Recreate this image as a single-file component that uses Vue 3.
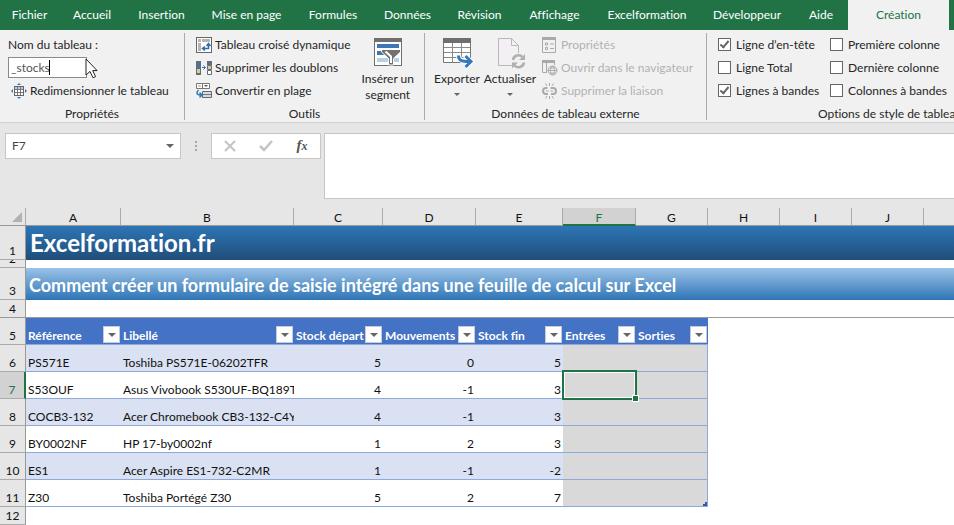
<script setup>
import { ref } from 'vue'

const tabs = ['Fichier', 'Accueil', 'Insertion', 'Mise en page', 'Formules', 'Données', 'Révision', 'Affichage', 'Excelformation', 'Développeur', 'Aide', 'Création']
const activeTab = ref('Création')
const tableName = ref('_stocks')
const cellRef = ref('F7')
const formula = ref('')

const options = ref([
  { id: 'header', label: 'Ligne d’en-tête', on: true },
  { id: 'first', label: 'Première colonne', on: false },
  { id: 'total', label: 'Ligne Total', on: false },
  { id: 'last', label: 'Dernière colonne', on: false },
  { id: 'rows', label: 'Lignes à bandes', on: true },
  { id: 'cols', label: 'Colonnes à bandes', on: false }
])

const letters = ['A', 'B', 'C', 'D', 'E', 'F', 'G', 'H', 'I', 'J', '']
const headers = ['Référence', 'Libellé', 'Stock départ', 'Mouvements', 'Stock fin', 'Entrées', 'Sorties']
const rows = [
  { n: 6, cells: ['PS571E', 'Toshiba PS571E-06202TFR', 5, 0, 5] },
  { n: 7, cells: ['S53OUF', 'Asus Vivobook S530UF-BQ189T', 4, -1, 3] },
  { n: 8, cells: ['COCB3-132', 'Acer Chromebook CB3-132-C4Y', 4, -1, 3] },
  { n: 9, cells: ['BY0002NF', 'HP 17-by0002nf', 1, 2, 3] },
  { n: 10, cells: ['ES1', 'Acer Aspire ES1-732-C2MR', 1, -1, -2] },
  { n: 11, cells: ['Z30', 'Toshiba Portégé Z30', 5, 2, 7] }
]
</script>

<template>
  <div class="app">
    <nav class="tabs">
      <button v-for="t in tabs" :key="t" class="tab" :class="{ active: t === activeTab }" @click="activeTab = t">{{ t }}</button>
    </nav>

    <section class="ribbon">
      <div class="group g-props">
        <div class="group-body stack">
          <label class="line" for="table-name">Nom du tableau :</label>
          <div class="line name-line">
            <input id="table-name" v-model="tableName" class="name-input" type="text">
            <span class="caret"></span>
            <svg class="pointer" width="14" height="21" viewBox="0 0 14 21"><path d="M1 1v16l4-3.600 3 6.400 2.600-1.200-2.900-6h4.400z" fill="#fff" stroke="#222" /></svg>
          </div>
          <button class="line cmd resize">
            <svg width="16" height="16" viewBox="0 0 16 16">
              <rect x="3.500" y="3.500" width="9" height="9" fill="#fff" stroke="#666" />
              <path d="M4 4h8v2H4z" fill="#b9cfe8" />
              <path d="M4 6.500h8M4 9.500h8M6.500 4v8M9.500 4v8" stroke="#777" />
              <path d="M8 0l2 2h-4zM8 16l2-2h-4zM0 8l2-2v4zM16 8l-2-2v4z" fill="#3b78b5" />
            </svg>
            Redimensionner le tableau
          </button>
        </div>
        <div class="group-title">Propriétés</div>
      </div>

      <div class="group g-tools">
        <div class="group-body">
          <div class="stack grow">
            <button class="line cmd">
              <svg width="16" height="16" viewBox="0 0 16 16">
                <rect x=".5" y=".5" width="15" height="15" fill="#fff" stroke="#666" />
                <path d="M2 2h3v3H2zM6 2h8v3H6zM2 6h3v8H2z" fill="#b5b5b5" />
                <path d="M7 11.500h5.500V7.500M10.500 9l2-2.500 2 2.500M9 9.500l-2.500 2L9 13.500" fill="none" stroke="#2f6fab" stroke-width="1.500" />
              </svg>
              Tableau croisé dynamique
            </button>
            <button class="line cmd">
              <svg width="16" height="16" viewBox="0 0 16 16">
                <path d="M0 1h5v14H0z" fill="#626c7b" /><path d="M1 5h3v3H1z" fill="#3f76b0" /><path d="M1 9h3v4H1z" fill="#e0c98f" />
                <path d="M11 1h5v4h-5z" fill="#626c7b" /><path d="M11.500 5.500h4v4h-4z" fill="#e0c98f" stroke="#626c7b" /><path d="M11.500 10.500h4v4h-4z" fill="#fff" stroke="#626c7b" />
                <path d="M6 7.500h3.500M7.500 5.500l2 2-2 2" fill="none" stroke="#3f76b0" />
              </svg>
              Supprimer les doublons
            </button>
            <button class="line cmd">
              <svg width="16" height="16" viewBox="0 0 16 16">
                <path d="M.5.500h13v5H.500zM6.500.500v5" fill="#fff" stroke="#777" /><path d="M2 3h3" stroke="#999" /><path d="M8 2h4l-2 2z" fill="#555" />
                <path d="M6.500 8.500h9v6h-9z" fill="#cfdcec" stroke="#666" /><path d="M7 11.500h8" stroke="#777" />
                <path d="M2.500 7C0 9.500.500 12 5 12M3.500 9.500L6 12l-2.500 2.500" fill="none" stroke="#3679b8" stroke-width="1.500" />
              </svg>
              Convertir en plage
            </button>
          </div>
          <button class="big slicer">
            <svg width="28" height="28" viewBox="0 0 28 28">
              <rect x=".5" y=".5" width="27" height="27" fill="#fff" stroke="#6f6f6f" />
              <path d="M0 0h28v4H0z" fill="#6f6f6f" />
              <path d="M3 6h22v4H3zM3 13h7v4H3z" fill="#3d78b4" /><path d="M3 20h22v4H3z" fill="#b9cfe8" />
              <path d="M7.500 11.500h19v2.500l-7 6.500V27h-5v-6.500L7.500 14z" fill="#737373" stroke="#fff" />
              <path d="M11.500 13.500l5.500 5V25" fill="none" stroke="#fff" stroke-width="2" />
            </svg>
            <span>Insérer un<br>segment</span>
          </button>
        </div>
        <div class="group-title">Outils</div>
      </div>

      <div class="group g-data">
        <div class="group-body">
          <button class="big export">
            <svg width="28" height="30" viewBox="0 0 28 30" overflow="visible">
              <path d="M.5.500h27v24H.500z" fill="#fff" stroke="#777" /><path d="M0 0h28v5H0z" fill="#6f6f6f" />
              <path d="M1 9.500h26M1 14.500h26M1 19.500h26M9.500 5v19M18.500 5v19" stroke="#8a8a8a" />
              <path d="M15.500 17c0 5 3 6.500 11 6.500M22 18l6 5.500-6 6" fill="none" stroke="#fff" stroke-width="5" />
              <path d="M15.500 17.500c0 5 3 6 11 6M22.500 18l5.500 5.500-5.500 5.500" fill="none" stroke="#3779ba" stroke-width="3" />
            </svg>
            <span>Exporter</span>
            <i class="arrow"></i>
          </button>
          <button class="big refresh">
            <svg width="26" height="30" viewBox="0 0 26 30" overflow="visible">
              <path d="M1.500.500h13l7 7v20h-20z" fill="#f4eff4" stroke="#b8b8b8" /><path d="M14.500.500v7h7" fill="none" stroke="#b8b8b8" />
              <circle cx="21.500" cy="23" r="8" fill="#f1f1f1" />
              <path d="M16 22a5.500 5.500 0 0 1 9.500-3M27 24.500a5.500 5.500 0 0 1-9.500 3" fill="none" stroke="#b0b0b0" stroke-width="2.500" />
              <path d="M28 16v6h-6zM15 30.500v-6h6z" fill="#b0b0b0" />
            </svg>
            <span>Actualiser</span>
            <i class="arrow"></i>
          </button>
          <div class="stack links">
            <button class="line cmd" disabled>
              <svg width="16" height="16" viewBox="0 0 16 16">
                <path d="M.500.500h13v15h-13z" fill="none" stroke="#aaa" /><path d="M0 0h14v3H0z" fill="#aaa" />
                <path d="M3.500 6h2v2h-2zM3.500 10.500h2v2h-2z" fill="none" stroke="#aaa" /><path d="M8 7h4M8 11.500h4" stroke="#aaa" />
              </svg>
              Propriétés
            </button>
            <button class="line cmd" disabled>
              <svg width="16" height="16" viewBox="0 0 16 16">
                <path d="M5 12.500H.500V.500h12V5M4.500 3v9" fill="none" stroke="#aaa" /><path d="M0 0h13v3H0z" fill="#aaa" />
                <circle cx="10.500" cy="10.500" r="4.500" fill="#f1f1f1" stroke="#aaa" /><path d="M6 10.500h9M10.500 6c-3 3-3 6 0 9M10.500 6c3 3 3 6 0 9M7.500 8h6M7.500 13h6" fill="none" stroke="#aaa" />
              </svg>
              Ouvrir dans le navigateur
            </button>
            <button class="line cmd" disabled>
              <svg width="16" height="16" viewBox="0 0 16 16">
                <path d="M5.500 5H4a3 3 0 0 0 0 6h2M8.500 5H11a3 3 0 0 1 0 6H9" fill="none" stroke="#aaa" stroke-width="2" />
                <path d="M7.500 0v3M3.500.500L5 3M11.500.500L10 3M7.500 13v3M3.500 15.500L5 13M11.500 15.500L10 13M4 8h2.500M8.500 8H11" stroke="#aaa" />
              </svg>
              Supprimer la liaison
            </button>
          </div>
        </div>
        <div class="group-title">Données de tableau externe</div>
      </div>

      <div class="group g-options">
        <div class="group-body checks">
          <label v-for="o in options" :key="o.id" class="line check" :for="'opt-' + o.id">
            <input :id="'opt-' + o.id" v-model="o.on" type="checkbox">{{ o.label }}
          </label>
        </div>
        <div class="group-title">Options de style de tableau</div>
      </div>
    </section>

    <section class="formula-bar">
      <div class="cell-ref">
        <input v-model="cellRef" type="text" aria-label="Zone Nom">
        <i class="arrow"></i>
      </div>
      <span class="dots"><i></i><i></i><i></i></span>
      <div class="fx-buttons">
        <button aria-label="Annuler"><svg width="12" height="12" viewBox="0 0 12 12"><path d="M1 1l10 10M11 1L1 11" stroke="#c4c4c4" stroke-width="2" /></svg></button>
        <button aria-label="Entrer"><svg width="14" height="12" viewBox="0 0 14 12"><path d="M1 6l4 4L13 1" fill="none" stroke="#c4c4c4" stroke-width="2.500" /></svg></button>
        <button class="fx" aria-label="Insérer une fonction">f<small>x</small></button>
      </div>
      <textarea v-model="formula" class="formula" aria-label="Barre de formule"></textarea>
    </section>

    <main class="sheet">
      <table>
        <colgroup>
          <col class="w-head"><col class="w-a"><col class="w-b"><col class="w-c"><col class="w-d"><col class="w-e"><col class="w-f">
          <col class="w-g"><col class="w-g"><col class="w-g"><col class="w-g"><col>
        </colgroup>
        <thead>
          <tr class="letters">
            <th class="corner"><svg width="10" height="10" viewBox="0 0 10 10"><path d="M10 0v10H0z" fill="#b2b2b2" /></svg></th>
            <th v-for="(l, i) in letters" :key="i" :class="{ current: l === 'F' }">{{ l }}</th>
          </tr>
        </thead>
        <tbody>
          <tr class="r-title"><th class="num">1</th><td colspan="11" class="title">Excelformation.fr</td></tr>
          <tr class="r-thin"><th class="num"><div>2</div></th><td colspan="11"></td></tr>
          <tr class="r-sub"><th class="num">3</th><td colspan="11" class="subtitle">Comment créer un formulaire de saisie intégré dans une feuille de calcul sur Excel</td></tr>
          <tr class="r-gap"><th class="num">4</th><td colspan="11"></td></tr>
          <tr class="r-head">
            <th class="num">5</th>
            <th v-for="h in headers" :key="h" class="field">
              <div><span>{{ h }}</span><button :aria-label="'Filtrer ' + h"><i class="arrow"></i></button></div>
            </th>
            <td colspan="4"></td>
          </tr>
          <tr v-for="r in rows" :key="r.n" class="r-data" :class="{ band: r.n % 2 === 0 }">
            <th class="num" :class="{ current: r.n === 7 }">{{ r.n }}</th>
            <td v-for="(c, i) in r.cells" :key="i" class="data" :class="{ right: i > 1 }">{{ c }}</td>
            <td class="data entry"><div v-if="r.n === 7" class="selection"></div></td>
            <td class="data entry last"><i v-if="r.n === 11" class="grip"></i></td>
            <td colspan="4"></td>
          </tr>
          <tr class="r-end"><th class="num">12</th><td colspan="11"></td></tr>
        </tbody>
      </table>
    </main>
  </div>
</template>

<style>
body { margin: 0; background: #fff; }
</style>

<style scoped>
.app { font: 12px/16px Lato, "Open Sans", sans-serif; font-variant-ligatures: none; color: #262626; overflow: hidden; background: #fff; }
button, input, textarea { font: inherit; font-variant-ligatures: none; color: inherit; margin: 0; padding: 0; border: 0; background: none; border-radius: 0; box-sizing: border-box; }
svg { flex: none; display: block; }

.tabs { display: grid; grid-template-columns: 59px 66px 73px 97px 76px 73px 71px 79px 106px 94px 54px 101px; background: #217346; }
.tab { height: 30px; color: #fff; white-space: nowrap; }
.tab.active { background: #f1f1f1; color: #217346; }

.ribbon { display: flex; padding: 3px 0 2px; background: #f1f1f1; border-bottom: 1px solid #d0d0d0; overflow: hidden; }
.group { box-sizing: border-box; flex: none; border-right: 1px solid #ababab; white-space: nowrap; }
.g-props { width: 185px; }
.g-tools { width: 240px; }
.g-data { width: 282px; }
.g-options { width: 364px; }
.group-body { display: flex; height: 69px; }
.stack { display: flex; flex-direction: column; }
.g-props .stack { padding-left: 8px; }
.line { display: flex; align-items: center; height: 23px; }
.cmd { gap: 3px; text-align: left; }
.cmd:disabled { color: #b1b1b1; }
.resize { padding-left: 3px; }
.group-title { text-align: center; padding-top: 6px; line-height: 12px; }
.g-options .group-title { text-align: left; padding-left: 111px; }
.name-line { position: relative; }
.name-input { width: 79px; height: 21px; padding-left: 2px; border: 1px solid #8a8a8a; background: #fff; color: #555; }
.caret { position: absolute; left: 41px; top: 4px; width: 1px; height: 15px; background: #000; }
.pointer { position: absolute; left: 77px; top: 2px; }
.g-tools .stack { padding-left: 11px; }
.big { display: flex; flex-direction: column; align-items: center; }
.slicer { padding: 5px 10px 0 0; gap: 5px; }
.grow { flex: 1; }
.export { width: 52px; margin-left: 6px; padding-top: 5px; gap: 3px; }
.refresh { width: 54px; padding-top: 5px; gap: 3px; }
.links { padding-left: 5px; }
.arrow { width: 0; height: 0; border: 4px solid transparent; border-top-color: #666; border-bottom: 0; }
.big .arrow { margin-top: 3px; border-width: 3px; border-bottom: 0; }
.checks { display: grid; grid-template-columns: 112px 120px; padding-left: 11px; }
.check { gap: 5px; }
.check input { appearance: none; flex: none; display: grid; place-items: center; width: 13px; height: 13px; border: 1px solid #666; background: #fff; }
.check input:checked::after { content: ""; width: 3px; height: 7px; margin-bottom: 3px; border: solid #666; border-width: 0 2px 2px 0; transform: rotate(40deg); }

.formula-bar { display: flex; align-items: flex-start; padding: 10px 0 9px 5px; background: #e6e6e6; }
.cell-ref { display: flex; align-items: center; box-sizing: border-box; width: 176px; height: 26px; padding: 0 6px; background: #fff; border: 1px solid #c6c6c6; }
.cell-ref input { flex: 1; min-width: 0; color: #444; }
.dots { display: flex; flex-direction: column; align-items: center; gap: 2px; width: 30px; padding-top: 8px; }
.dots i { width: 2px; height: 2px; background: #a6a6a6; }
.fx-buttons { display: grid; grid-template-columns: 1fr 1fr 1fr; box-sizing: border-box; width: 110px; height: 26px; background: #fff; border: 1px solid #c6c6c6; }
.fx-buttons button { display: grid; place-items: center; }
.fx-buttons .fx { display: flex; align-items: baseline; justify-content: center; font: italic bold 15px/22px "Liberation Serif", serif; color: #555; }
.fx small { font-size: 12px; }
.formula { flex: 1; height: 66px; margin-left: 3px; background: #fff; border: 1px solid #c6c6c6; border-right: 0; resize: none; }

.sheet { overflow: hidden; color: #111; }
table { width: 100%; table-layout: fixed; border-collapse: separate; border-spacing: 0; }
.w-head { width: 26px; }
.w-a { width: 95px; }
.w-b { width: 173px; }
.w-c { width: 89px; }
.w-d { width: 93px; }
.w-e { width: 87px; }
.w-f { width: 73px; }
.w-g { width: 72px; }
th, td { box-sizing: border-box; padding: 0; overflow: hidden; white-space: nowrap; vertical-align: bottom; text-align: left; }
.letters th { height: 18px; background: #e6e6e6; border-right: 1px solid #ababab; border-bottom: 1px solid #999; text-align: center; font-weight: 400; line-height: 15px; }
.letters th:last-child { border-right: 0; }
.letters .current { background: #d2d2d2; border-bottom: 2px solid #217346; color: #217346; line-height: 13px; }
.corner svg { margin: 0 3px 3px auto; }
.num { background: #e6e6e6; border-right: 1px solid #999; border-bottom: 1px solid #ababab; text-align: center; font-weight: 400; }
.num.current { background: #d2d2d2; border-right: 2px solid #217346; color: #217346; }
.r-title > * { height: 34px; }
.r-thin > * { height: 8px; }
.r-thin div { display: flex; align-items: flex-end; justify-content: center; height: 7px; overflow: hidden; }
.r-sub > * { height: 32px; }
.r-gap > * { height: 18px; border-bottom: 1px solid #999; }
.r-head > *, .r-data > * { height: 27px; }
.r-end > * { height: 18px; }
.title { padding-left: 4px; vertical-align: middle; background: linear-gradient(#2e75b6, #1f4e79); color: #fff; font-size: 24px; line-height: 28px; font-weight: 700; }
.subtitle { padding: 2px 0 0 3px; vertical-align: middle; background: linear-gradient(#9bc2e6, #2e75b6); color: #fff; font-size: 18px; line-height: 24px; font-weight: 700; }
.field { background: #4472c4; border-bottom: 1px solid #8ea9db; color: #fff; font-weight: 700; }
.field div { display: flex; align-items: flex-end; padding: 0 1px 0 2px; }
.field span { flex: 1; min-width: 0; overflow: hidden; }
.field button { display: grid; place-items: center; flex: none; width: 17px; height: 17px; margin-bottom: 1px; background: #fff; border: 1px solid #c5cbd8; }
.data { position: relative; padding: 0 2px; border-bottom: 1px solid #8ea9db; background: #fff; }
.band .data { background: #d9e1f2; }
.right { text-align: right; }
.r-data .entry { background: #d9d9d9; overflow: visible; }
.last { border-right: 1px solid #8ea9db; }
.selection { position: absolute; inset: -2px -1px; z-index: 1; border: 2px solid #217346; box-shadow: inset 0 0 0 1px #fff; }
.selection::after { content: ""; position: absolute; right: -4px; bottom: -4px; width: 5px; height: 5px; background: #217346; border: 1px solid #fff; }
.grip { position: absolute; right: 0; bottom: 0; width: 4px; height: 4px; background: #3a55a4; clip-path: polygon(100% 0, 100% 100%, 0 100%, 0 50%, 50% 50%, 50% 0); }
</style>
